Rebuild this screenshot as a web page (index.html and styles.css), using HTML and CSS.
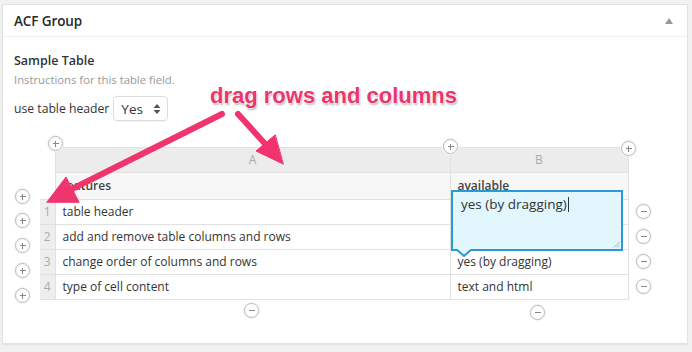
FILE: index.html
```html
<!DOCTYPE html>
<html>
<head>
<meta charset="utf-8">
<link rel="stylesheet" href="styles.css">
</head>
<body>
<div class="postbox">
  <div class="hndle"><span class="title">ACF Group</span><span class="toggle"></span></div>
  <div class="inside">
    <div class="label">Sample Table</div>
    <div class="desc">Instructions for this table field.</div>
    <div class="opt">use table header
      <span class="select">Yes
        <svg class="updown" width="8" height="12" viewBox="0 0 8 12"><path d="M4 1 L7.5 5 H0.5 Z M4 11 L7.5 7 H0.5 Z" fill="#555"/></svg>
      </span>
    </div>
    <div class="tablewrap">
      <table class="grid">
        <colgroup><col class="c-num"><col class="c-a"><col class="c-b"></colgroup>
        <tr class="letters"><td class="blank"></td><td>A</td><td>B</td></tr>
        <tr class="head"><td class="blank"></td><td>features</td><td>available</td></tr>
        <tr><td class="num">1</td><td>table header</td><td></td></tr>
        <tr><td class="num">2</td><td>add and remove table columns and rows</td><td></td></tr>
        <tr><td class="num">3</td><td>change order of columns and rows</td><td>yes (by dragging)</td></tr>
        <tr><td class="num">4</td><td>type of cell content</td><td>text and html</td></tr>
      </table>

      <span class="ico plus" style="left:8px;top:-11px"></span>
      <span class="ico plus" style="left:403px;top:-8px"></span>
      <span class="ico plus" style="left:581px;top:-6px"></span>

      <span class="ico plus" style="left:-25px;top:42px"></span>
      <span class="ico plus" style="left:-25px;top:66px"></span>
      <span class="ico plus" style="left:-25px;top:91px"></span>
      <span class="ico plus" style="left:-25px;top:116px"></span>
      <span class="ico plus" style="left:-25px;top:141px"></span>

      <span class="ico minus" style="left:596px;top:57px"></span>
      <span class="ico minus" style="left:596px;top:82px"></span>
      <span class="ico minus" style="left:596px;top:107px"></span>
      <span class="ico minus" style="left:596px;top:132px"></span>

      <span class="ico minus" style="left:204px;top:156px"></span>
      <span class="ico minus" style="left:490px;top:158px"></span>

      <div class="editor">
        <div class="editor-text">yes (by dragging)<span class="caret"></span></div>
        <svg class="grip" width="7" height="7" viewBox="0 0 7 7"><path d="M6.5 1 L1 6.5 M6.5 4 L4 6.5" stroke="#999" stroke-width="0.8"/></svg>
        <svg class="pointer" width="16" height="8" viewBox="0 0 16 8"><path d="M0 0 L8 7 L16 0 Z" fill="#e2f6fd"/><path d="M0 0 L8 7 L16 0" fill="none" stroke="#2a9ad0" stroke-width="2"/></svg>
      </div>
    </div>
  </div>
</div>

<svg class="arrows" width="692" height="352" viewBox="0 0 692 352">
  <g fill="#f0346d" stroke="#f0346d" stroke-linecap="round">
    <line x1="222" y1="114" x2="70" y2="190" stroke-width="6"/>
    <polygon points="47,202 66,177 79,202" stroke-width="1" stroke-linejoin="round"/>
    <line x1="238" y1="114" x2="268" y2="147" stroke-width="6"/>
    <polygon points="283,164 256,151 275,135" stroke-width="1" stroke-linejoin="round"/>
  </g>
</svg>
<div class="callout">drag rows and columns</div>
</body>
</html>
```

FILE: styles.css
```css
html, body {
  margin: 0;
  padding: 0;
}
body {
  background: #f1f1f1;
  width: 692px;
  height: 352px;
  position: relative;
  overflow: hidden;
  font-family: "Open Sans", "Liberation Sans", sans-serif;
  color: #444;
}
.postbox {
  margin: 4px 0 0 2px;
  width: 684px;
  height: 338px;
  background: #fff;
  border: 1px solid #e3e3e3;
  box-shadow: 0 1px 1px rgba(0,0,0,0.05);
}
.hndle {
  height: 31px;
  border-bottom: 1px solid #eee;
  display: flex;
  align-items: center;
  justify-content: space-between;
  padding: 0 12px 0 11px;
}
.title {
  font-size: 13.5px;
  font-weight: 600;
  color: #23282d;
  letter-spacing: -0.1px;
}
.toggle {
  width: 0;
  height: 0;
  border-left: 4px solid transparent;
  border-right: 4px solid transparent;
  border-bottom: 6px solid #999;
  margin-right: 2px;
}
.inside {
  padding: 15px 11px 0 11px;
}
.label {
  font-size: 12.5px;
  font-weight: 600;
  color: #333;
  line-height: 18px;
}
.desc {
  font-size: 11.3px;
  color: #999;
  line-height: 17px;
  margin-top: 1px;
}
.opt {
  margin-top: 8px;
  font-size: 12.2px;
  color: #333;
  display: flex;
  align-items: center;
  gap: 4px;
}
.select {
  display: inline-flex;
  align-items: center;
  gap: 10px;
  height: 23px;
  padding: 0 6px 0 7px;
  border: 1px solid #ddd;
  border-radius: 4px;
  font-size: 13.5px;
  color: #333;
  box-shadow: 0 1px 1px rgba(0,0,0,0.04);
}
.tablewrap {
  position: relative;
  margin: 26px 0 0 26px;
  width: 588px;
}
.grid {
  border-collapse: collapse;
  table-layout: fixed;
  width: 588px;
  font-size: 12px;
  color: #333;
}
.c-num { width: 15px; }
.c-a { width: 395px; }
.c-b { width: 178px; }
.grid td {
  border: 1px solid #e1e1e1;
  height: 24px;
  padding: 0 0 0 7px;
  white-space: nowrap;
  overflow: hidden;
  line-height: 24px;
}
.grid td.blank {
  border: none;
  border-right: 1px solid #e1e1e1;
  background: #fff;
}
.letters td {
  background: #ececec;
  text-align: center;
  color: #aaa;
  font-size: 12px;
  padding: 0;
}
.head td {
  background: #f7f7f7;
  font-weight: 600;
  color: #444;
  height: 26px;
}
.grid td.num {
  background: #eee;
  color: #aaa;
  text-align: center;
  padding: 0;
  font-size: 12px;
  border-left: none;
}
.ico {
  position: absolute;
  width: 13px;
  height: 13px;
  border: 1px solid #bbb;
  border-radius: 50%;
  background: #fff;
  box-shadow: 0 0 0 1px #f4f4f4;
}
.ico::before, .ico.plus::after {
  content: "";
  position: absolute;
  background: #888;
  left: 3.5px;
  top: 6px;
  width: 6px;
  height: 1px;
}
.ico.plus::after {
  left: 6px;
  top: 3.5px;
  width: 1px;
  height: 6px;
}
.editor {
  position: absolute;
  left: 411px;
  top: 43px;
  width: 168px;
  height: 57px;
  border: 2px solid #2a9ad0;
  background: #e2f6fd;
}
.editor-text {
  font-size: 13.5px;
  color: #333;
  padding: 3px 0 0 8px;
  line-height: 18px;
}
.caret {
  display: inline-block;
  width: 1px;
  height: 15px;
  background: #333;
  vertical-align: -3px;
  margin-left: 1px;
}
.grip {
  position: absolute;
  right: 1px;
  bottom: 1px;
}
.pointer {
  position: absolute;
  left: 3px;
  top: 57px;
}
.arrows {
  position: absolute;
  left: 0;
  top: 0;
  pointer-events: none;
}
.callout {
  position: absolute;
  left: 210px;
  top: 83px;
  font-family: "Liberation Sans", Arial, sans-serif;
  font-weight: bold;
  font-size: 22px;
  color: #ec356c;
  text-shadow: 0 0 2px #fff, 0 0 2px #fff, 1px 2px 2px rgba(0,0,0,0.3);
  white-space: nowrap;
}
```
